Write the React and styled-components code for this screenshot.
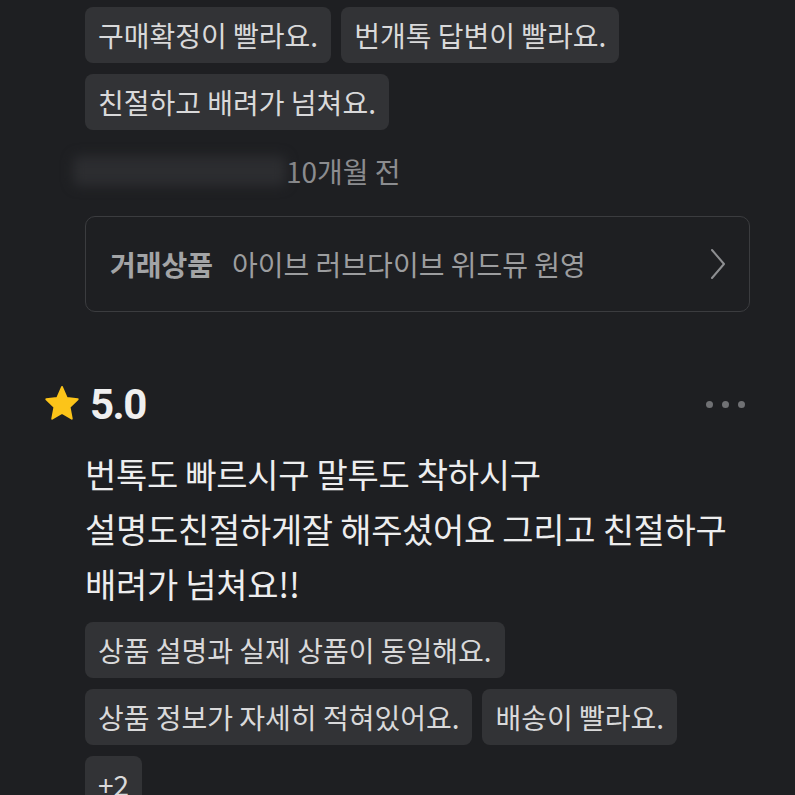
import styled, { createGlobalStyle } from 'styled-components'

const GlobalStyle = createGlobalStyle`
  html, body {
    margin: 0;
    padding: 0;
    background: #1e1f22;
  }
  body {
    font-family: "Noto Sans CJK KR", "Noto Sans", sans-serif;
    overflow: hidden;
  }
`;

const Page = styled.div`
  width: 795px;
  height: 795px;
  box-sizing: border-box;
  padding: 7px 45px 0 44px;
  background: #1e1f22;
  overflow: hidden;
`;

const Indent = styled.div`
  padding-left: 41px;
  margin-top: ${(p) => p.$top || 0}px;
`;

const ChipList = styled.div`
  display: flex;
  flex-wrap: wrap;
  gap: 11px 10px;
  max-width: 655px;
`;

const Chip = styled.span`
  display: inline-flex;
  align-items: center;
  height: 56px;
  padding: 0 13px;
  box-sizing: border-box;
  border-radius: 8px;
  background: #323336;
  color: #d9d9da;
  font-size: 28px;
  white-space: nowrap;
`;

const DateRow = styled.div`
  display: flex;
  align-items: center;
  height: 38px;
  font-size: 28px;
  color: #8b8c8f;
`;

const BlurName = styled.span`
  display: inline-block;
  width: 213px;
  height: 30px;
  margin-left: -12px;
  border-radius: 6px;
  background: #2c2d30;
  filter: blur(6px);
`;

const ProductCard = styled.div`
  display: flex;
  align-items: center;
  height: 96px;
  box-sizing: border-box;
  padding: 0 22px 0 24px;
  border: 1.5px solid #3b3c3f;
  border-radius: 10px;
  font-size: 28px;
  cursor: pointer;
`;

const CardLabel = styled.span`
  font-weight: 700;
  color: #a3a4a6;
  margin-right: 19px;
`;

const CardTitle = styled.span`
  flex: 1;
  color: #9c9d9f;
`;

const Header = styled.div`
  display: flex;
  align-items: center;
  height: 40px;
  margin-top: 72px;
`;

const Score = styled.span`
  margin-left: 10px;
  font-family: Roboto, "Liberation Sans", sans-serif;
  font-weight: 700;
  font-size: 42px;
  letter-spacing: -1.5px;
  color: #efefef;
`;

const MoreButton = styled.div`
  margin-left: auto;
  display: flex;
  gap: 9px;
  padding-right: 5px;
`;

const Dot = styled.span`
  width: 7px;
  height: 7px;
  border-radius: 50%;
  background: #707174;
`;

const ReviewText = styled.p`
  margin: 22px 0 0;
  font-size: 34px;
  line-height: 55px;
  color: #ededee;
  letter-spacing: -0.3px;
`;

function Star() {
  return (
    <svg width="36" height="38" viewBox="0 0 24 24" preserveAspectRatio="none">
      <path
        d="M12 1.2l3.2 6.9 7.3.9-5.4 5 1.45 7.3L12 17.7 5.45 21.3l1.45-7.3-5.4-5 7.3-.9z"
        fill="#fcc419"
        stroke="#fcc419"
        strokeWidth="1.2"
        strokeLinejoin="round"
      />
    </svg>
  );
}

function Chevron() {
  return (
    <svg width="18" height="34" viewBox="0 0 18 34">
      <path d="M3 3l12 14L3 31" fill="none" stroke="#8d8e91" strokeWidth="2" strokeLinecap="round" strokeLinejoin="round" />
    </svg>
  );
}

const prevTags = ['구매확정이 빨라요.', '번개톡 답변이 빨라요.', '친절하고 배려가 넘쳐요.'];
const tags = ['상품 설명과 실제 상품이 동일해요.', '상품 정보가 자세히 적혀있어요.', '배송이 빨라요.', '+2'];

export default function App() {
  return (
    <>
      <GlobalStyle />
      <Page>
        <Indent>
          <ChipList>
            {prevTags.map((t) => (
              <Chip key={t}>{t}</Chip>
            ))}
          </ChipList>
        </Indent>

        <Indent $top={22}>
          <DateRow>
            <BlurName />
            <span>10개월 전</span>
          </DateRow>
        </Indent>

        <Indent $top={26}>
          <ProductCard>
            <CardLabel>거래상품</CardLabel>
            <CardTitle>아이브 러브다이브 위드뮤 원영</CardTitle>
            <Chevron />
          </ProductCard>
        </Indent>

        <Header>
          <Star />
          <Score>5.0</Score>
          <MoreButton>
            <Dot />
            <Dot />
            <Dot />
          </MoreButton>
        </Header>

        <Indent>
          <ReviewText>
            번톡도 빠르시구 말투도 착하시구
            <br />
            설명도친절하게잘 해주셨어요 그리고 친절하구
            <br />
            배려가 넘쳐요!!
          </ReviewText>
        </Indent>

        <Indent $top={11}>
          <ChipList>
            {tags.map((t) => (
              <Chip key={t}>{t}</Chip>
            ))}
          </ChipList>
        </Indent>
      </Page>
    </>
  );
}
